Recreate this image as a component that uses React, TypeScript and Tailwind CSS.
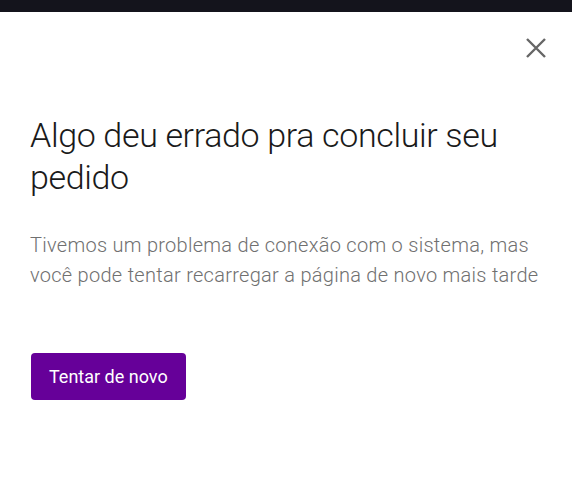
import React from "react";

export default function App() {
  return (
    <div className="w-[572px] h-[500px] bg-white overflow-hidden" style={{ fontFamily: "Roboto, 'Liberation Sans', sans-serif" }}>
      <div className="h-[12px] bg-[#14141c]" />
      <div className="flex justify-end pt-[25px] pr-[25px]">
        <button className="w-[22px] h-[22px] flex items-center justify-center" aria-label="Fechar">
          <svg width="22" height="22" viewBox="0 0 22 22" fill="none">
            <path d="M2 2 L20 20 M20 2 L2 20" stroke="#666666" strokeWidth="2.4" />
          </svg>
        </button>
      </div>
      <div className="px-[30px]">
        <h1 className="mt-[55px] text-[34px] leading-[42px] font-light tracking-[-0.35px] text-[#1a1a1a]">
          Algo deu errado pra concluir seu pedido
        </h1>
        <p className="mt-[32px] text-[20px] leading-[30px] font-light tracking-[0.28px] text-[#707070]">
          Tivemos um problema de conexão com o sistema, mas você pode tentar recarregar a página de novo mais tarde
        </p>
        <button className="mt-[63px] ml-[1px] h-[47px] px-[18px] rounded-[4px] bg-[#660099] text-white text-[18px] font-normal">
          Tentar de novo
        </button>
      </div>
    </div>
  );
}
